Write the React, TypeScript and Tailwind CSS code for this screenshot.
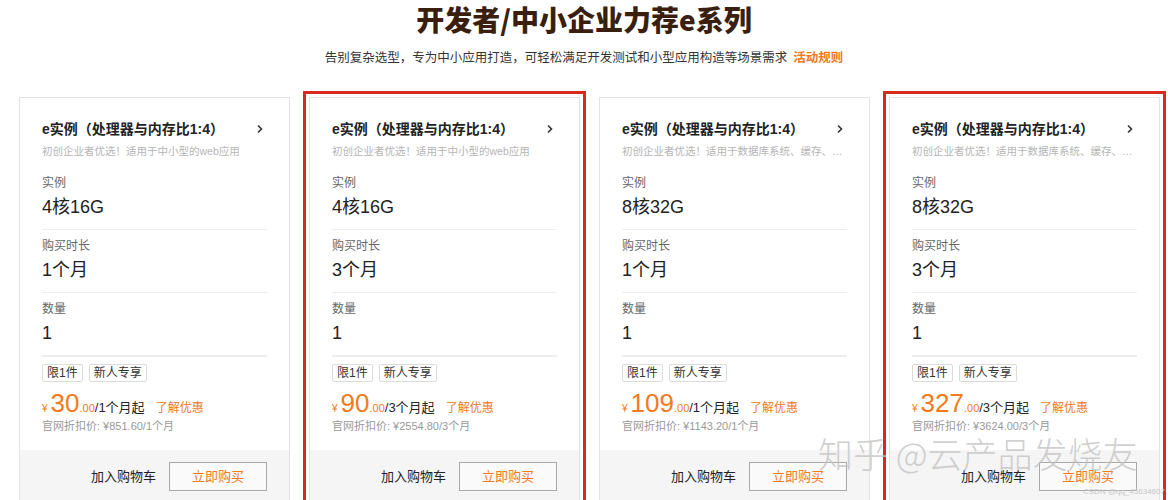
import React from 'react';

const plans = [
  { desc: '初创企业者优选！适用于中小型的web应用', spec: '4核16G', term: '1个月', price: '30', unit: '/1个月起', list: '官网折扣价: ¥851.60/1个月', hot: false },
  { desc: '初创企业者优选！适用于中小型的web应用', spec: '4核16G', term: '3个月', price: '90', unit: '/3个月起', list: '官网折扣价: ¥2554.80/3个月', hot: true },
  { desc: '初创企业者优选！适用于数据库系统、缓存、分布式应用', spec: '8核32G', term: '1个月', price: '109', unit: '/1个月起', list: '官网折扣价: ¥1143.20/1个月', hot: false },
  { desc: '初创企业者优选！适用于数据库系统、缓存、分布式应用', spec: '8核32G', term: '3个月', price: '327', unit: '/3个月起', list: '官网折扣价: ¥3624.00/3个月', hot: true },
];

const font = { fontFamily: '"Liberation Sans", "Noto Sans CJK SC", sans-serif' };

function Field({ label, value, last }: { label: string; value: string; last?: boolean }) {
  return (
    <div className={`pt-[7px] pb-[10px] ${last ? '' : 'border-b border-[#eeeeee]'}`}>
      <div className="text-[12px] leading-[18px] text-[#666]">{label}</div>
      <div className="mt-[3px] text-[18px] leading-[24px] text-[#222]">{value}</div>
    </div>
  );
}

export default function App() {
  return (
    <div className="relative w-[1168px] h-[500px] overflow-hidden bg-white" style={font}>
      {/* Header */}
      <h1 className="pt-[1px] text-center text-[28px] leading-[36px] font-black text-[#3a1e0e]" style={{ fontFamily: '"Noto Sans CJK SC", sans-serif' }}>
        开发者/中小企业力荐e系列
      </h1>
      <p className="mt-[11px] text-center text-[12.5px] leading-[20px] text-[#333]">
        告别复杂选型，专为中小应用打造，可轻松满足开发测试和小型应用构造等场景需求
        <span className="ml-[6px] font-bold text-[#f07a1e]">活动规则</span>
      </p>

      {/* Cards */}
      <div className="mt-[29px] flex gap-[19px] px-[19px]">
        {plans.map((p, i) => (
          <div
            key={i}
            className={`w-[271px] shrink-0 border border-[#e3e3e3] bg-white ${
              p.hot ? 'outline-[3px] outline-solid outline-[#d8281f] outline-offset-[3px]' : ''
            }`}
          >
            <div className="px-[22px] pt-[21px]">
              <div className="flex items-center justify-between">
                <span className="text-[14px] leading-[20px] font-bold text-[#222]">e实例（处理器与内存比1:4）</span>
                <svg width="10" height="10" viewBox="0 0 10 10" className="mr-[2px]">
                  <path d="M3 1.5 L6.5 5 L3 8.5" fill="none" stroke="#333" strokeWidth="1.6" />
                </svg>
              </div>
              <div className="mt-[4px] truncate text-[10.5px] leading-[16px] text-[#b5b5b5]">{p.desc}</div>
              <div className="mt-[8px]">
                <Field label="实例" value={p.spec} />
                <Field label="购买时长" value={p.term} />
                <Field label="数量" value="1" />
              </div>
              <div className="border-t border-[#eeeeee] pt-[7px]">
                <div className="flex gap-[6px]">
                  <span className="rounded-[2px] border border-[#dcdcdc] px-[4px] text-[12px] leading-[16px] text-[#333]">限1件</span>
                  <span className="rounded-[2px] border border-[#dcdcdc] px-[4px] text-[12px] leading-[16px] text-[#333]">新人专享</span>
                </div>
                <div className="mt-[6px] flex items-baseline h-[30px]">
                  <span className="text-[10px] text-[#f47a20]">¥</span>
                  <span className="ml-[3px] text-[26px] leading-[30px] text-[#f47a20]">{p.price}</span>
                  <span className="text-[11px] text-[#f47a20]">.00</span>
                  <span className="text-[13px] text-[#222]">{p.unit}</span>
                  <span className="ml-[11px] text-[12px] text-[#f07a1e]">了解优惠</span>
                </div>
                <div className="text-[11px] leading-[16px] text-[#999]">{p.list}</div>
              </div>
            </div>
            <div className="mt-[16px] flex h-[60px] items-start justify-end gap-[13px] bg-[#f5f5f5] px-[22px] pt-[12px]">
              <span className="text-[13px] leading-[29px] text-[#222]">加入购物车</span>
              <button className="h-[29px] w-[98px] border border-[#a8a8a8] bg-[#fafafa] text-[13px] text-[#f07a1e]">
                立即购买
              </button>
            </div>
          </div>
        ))}
      </div>

      {/* Watermarks */}
      <div
        className="absolute left-[818px] top-[432px] whitespace-nowrap text-[35px] leading-[42px] text-[#c4c4c4]/80"
        style={{ fontFamily: '"Noto Sans CJK SC", sans-serif', fontWeight: 300 }}
      >
        知乎 @云产品发烧友
      </div>
      <div className="absolute left-[1083px] top-[487px] text-[8px] leading-[10px] text-[#c8c8c8]">CSDN @qq_45634607</div>
    </div>
  );
}
